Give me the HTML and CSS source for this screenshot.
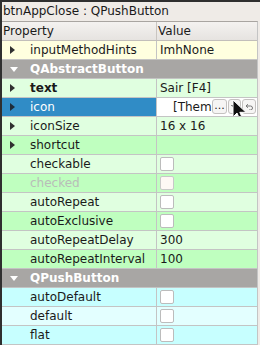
FILE: index.html
```html
<!DOCTYPE html>
<html lang="en">

<head>
  <meta charset="UTF-8" />
  <title>Property Editor</title>
  <link rel="stylesheet" href="styles.css">
</head>

<body>
  <div class="panel">
    <div class="title">btnAppClose : QPushButton</div>

    <div class="tree">
      <div class="head">
        <div class="cell">Property</div>
        <div class="cell">Value</div>
      </div>

      <div class="row yellow">
        <div class="cell name"><span class="arrow"></span>inputMethodHints</div>
        <div class="cell val">ImhNone</div>
      </div>

      <div class="row section">
        <div class="cell name"><span class="arrow open"></span>QAbstractButton</div>
        <div class="cell val"></div>
      </div>

      <div class="row green-l">
        <div class="cell name bold"><span class="arrow"></span>text</div>
        <div class="cell val">Sair [F4]</div>
      </div>

      <div class="row green-d selected">
        <div class="cell name"><span class="arrow"></span>icon</div>
        <div class="cell val editor">
          <span class="edit-text">[Them</span>
          <span class="tool dots">...</span>
          <span class="tool drop"><svg width="7" height="4" viewBox="0 0 7 4"><path d="M0 0h7L3.5 4z" fill="#333"/></svg></span>
          <span class="tool reset"><svg width="9" height="7" viewBox="0 0 9 7"><path d="M3 1.2L1 3l2 1.8M1 3h4.5a2 2 0 0 1 0 4H4" fill="none" stroke="#777" stroke-width="1"/></svg></span>
          <svg class="cursor" width="15" height="23" viewBox="0 0 15 23">
            <path d="M1 1v17l4-4 3.2 7.5 2.8-1.2-3.2-7H14z" fill="#111" stroke="#fff" stroke-width="1"/>
          </svg>
        </div>
      </div>

      <div class="row green-l">
        <div class="cell name"><span class="arrow"></span>iconSize</div>
        <div class="cell val">16 x 16</div>
      </div>

      <div class="row green-d">
        <div class="cell name"><span class="arrow"></span>shortcut</div>
        <div class="cell val"></div>
      </div>

      <div class="row green-l">
        <div class="cell name">checkable</div>
        <div class="cell val"><span class="check"></span></div>
      </div>

      <div class="row green-d">
        <div class="cell name disabled">checked</div>
        <div class="cell val"><span class="check off"></span></div>
      </div>

      <div class="row green-l">
        <div class="cell name">autoRepeat</div>
        <div class="cell val"><span class="check"></span></div>
      </div>

      <div class="row green-d">
        <div class="cell name">autoExclusive</div>
        <div class="cell val"><span class="check"></span></div>
      </div>

      <div class="row green-l">
        <div class="cell name">autoRepeatDelay</div>
        <div class="cell val">300</div>
      </div>

      <div class="row green-d">
        <div class="cell name">autoRepeatInterval</div>
        <div class="cell val">100</div>
      </div>

      <div class="row section">
        <div class="cell name"><span class="arrow open"></span>QPushButton</div>
        <div class="cell val"></div>
      </div>

      <div class="row cyan-d">
        <div class="cell name">autoDefault</div>
        <div class="cell val"><span class="check"></span></div>
      </div>

      <div class="row cyan-l">
        <div class="cell name">default</div>
        <div class="cell val"><span class="check"></span></div>
      </div>

      <div class="row cyan-d">
        <div class="cell name">flat</div>
        <div class="cell val"><span class="check"></span></div>
      </div>

      <div class="row cyan-l"></div>
    </div>
  </div>
</body>

</html>
```

FILE: styles.css
```css
* {
  box-sizing: border-box;
  margin: 0;
  padding: 0;
}

body {
  width: 260px;
  height: 345px;
  overflow: hidden;
  background-color: #efebe7;
  font-family: "DejaVu Sans", sans-serif;
  font-size: 12px;
  color: #1a1a1a;
}

.panel {
  height: 345px;
  border-top: 2px solid #2f2f2f;
  border-left: 2px solid #2f2f2f;
  overflow: hidden;
}

.title {
  height: 19px;
  line-height: 19px;
  padding-left: 1px;
  background-color: #efebe7;
  white-space: nowrap;
}

.tree {
  width: 256px;
  border-top: 1px solid #a9a5a1;
  border-right: 1px solid #c4c4c4;
  background-color: #fff;
}

.head,
.row {
  display: grid;
  grid-template-columns: 155px 1fr;
}

.head {
  height: 19px;
  background: linear-gradient(#f4f2f0, #e6e3e0);
  border-bottom: 1px solid #c2beba;
}

.head .cell {
  line-height: 18px;
  padding-left: 1px;
}

.head .cell:first-child {
  border-right: 1px solid #c9c5c1;
}

.row {
  height: 19px;
  border-bottom: 1px solid #c4c4c4;
}

.cell {
  position: relative;
  white-space: nowrap;
  overflow: hidden;
}

.row .cell {
  line-height: 18px;
}

.name {
  padding-left: 28px;
  border-right: 1px solid #c4c4c4;
}

.val {
  padding-left: 3px;
}

.bold {
  font-weight: bold;
}

.disabled {
  color: #b9bdb9;
}

/* row colours */
.yellow { background-color: #ffffdf; }
.green-l { background-color: #e0ffe0; }
.green-d { background-color: #bfffbf; }
.cyan-l { background-color: #e3ffff; }
.cyan-d { background-color: #c7ffff; }

.section {
  background-color: #a8a6a4;
  color: #fff;
  font-weight: bold;
}

.section .name {
  border-right: none;
}

.selected .name {
  background-color: #308cc6;
  color: #fff;
}

/* expand arrows */
.arrow {
  position: absolute;
  left: 8px;
  top: 5px;
  width: 0;
  height: 0;
  border-top: 4px solid transparent;
  border-bottom: 4px solid transparent;
  border-left: 5px solid #303030;
}

.selected .arrow {
  border-left-color: #1f2d3a;
}

.arrow.open {
  left: 8px;
  top: 7px;
  border-left: 4px solid transparent;
  border-right: 4px solid transparent;
  border-top: 5px solid #fff;
  border-bottom: none;
}

/* checkboxes */
.check {
  display: inline-block;
  width: 14px;
  height: 14px;
  margin-top: 2px;
  vertical-align: top;
  background-color: #fff;
  border: 1px solid #bcbcbc;
  border-radius: 2px;
}

.check.off {
  background-color: #fdf8f4;
  border-color: #c8c8c8;
}

/* icon editor */
.editor {
  background-color: #fff;
  padding-left: 16px;
}

.edit-text {
  display: inline-block;
}

.tool {
  position: absolute;
  top: 1px;
  height: 15px;
  background-color: #f6f5f4;
  border: 1px solid #c4c2c0;
  border-radius: 3px;
  line-height: 11px;
  text-align: center;
  color: #222;
}

.dots {
  left: 55px;
  width: 15px;
  font-size: 11px;
}

.drop {
  left: 71px;
  width: 13px;
  line-height: 10px;
}

.drop svg {
  margin-top: 4px;
}

.reset {
  left: 85px;
  width: 14px;
  line-height: 12px;
}

.reset svg {
  margin-top: 3px;
}

.cursor {
  position: absolute;
  left: 75px;
  top: 1px;
}
```
